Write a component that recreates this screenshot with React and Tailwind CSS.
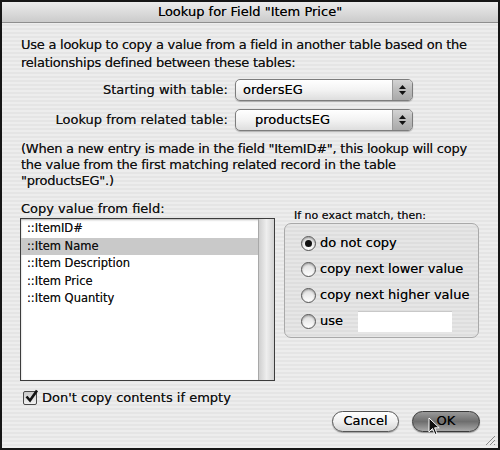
import React from 'react'

const stripes = 'bg-[image:repeating-linear-gradient(180deg,#ededed_0px,#ededed_2px,#e5e5e5_2px,#e5e5e5_4px)]'

function Popup({ value, indent }){
  return (
    <div className="w-[178px] h-[22px] rounded-[5px] border border-[#7d7d7d] flex overflow-hidden bg-gradient-to-b from-white via-[#f3f3f3] to-[#dedede] shadow-[0_1px_1px_rgba(0,0,0,0.25)]">
      <div className={`flex-1 flex items-center text-[13px] text-black ${indent ? 'pl-[19px]' : 'pl-[7px]'}`}>{value}</div>
      <div className="w-[20px] border-l border-[#9a9a9a] bg-gradient-to-b from-[#d4d4d4] via-[#bcbcbc] to-[#a9a9a9] flex flex-col items-center justify-center gap-[2px]">
        <svg width="7" height="4" viewBox="0 0 7 4"><path d="M3.5 0L7 4H0z" fill="#111" /></svg>
        <svg width="7" height="4" viewBox="0 0 7 4"><path d="M0 0h7L3.5 4z" fill="#111" /></svg>
      </div>
    </div>
  )
}

function Radio({ on, label, children }){
  return (
    <div className="h-[26px] flex items-center">
      <div className="w-[15px] h-[15px] rounded-full border border-[#555] bg-gradient-to-b from-[#dcdcdc] to-white shadow-[inset_0_1px_2px_rgba(0,0,0,0.3)] flex items-center justify-center">
        {on && <div className="w-[7px] h-[7px] rounded-full bg-[#111]" />}
      </div>
      <span className="ml-[4px] text-[13px] text-black">{label}</span>
      {children}
    </div>
  )
}

export default function App(){
  const items = ['::ItemID#', '::Item Name', '::Item Description', '::Item Price', '::Item Quantity']

  return (
    <div className={`w-[500px] h-[450px] border-2 border-[#161616] relative overflow-hidden ${stripes} text-[#111] [text-shadow:0_0_0.4px_rgba(0,0,0,0.6)]`} style={{ fontFamily: '"DejaVu Sans", Verdana, sans-serif' }}>
      <div className="h-[21px] bg-gradient-to-b from-[#ececec] to-[#cbcbcb] border-b border-[#8e8e8e] rounded-t-[5px] flex items-center justify-center text-[13px] text-black">
        Lookup for Field "Item Price"
      </div>

      <div className="pl-[19px]">
        <p className="mt-[13px] text-[13px] leading-[17.5px] tracking-[-0.25px]">
          Use a lookup to copy a value from a field in another table based on the<br />
          relationships defined between these tables:
        </p>

        <div className="mt-[8px] flex flex-col gap-[8px]">
          <div className="flex items-center">
            <div className="w-[207px] text-right text-[13px]">Starting with table:</div>
            <div className="ml-[7px]"><Popup value="ordersEG" /></div>
          </div>
          <div className="flex items-center">
            <div className="w-[207px] text-right text-[13px]">Lookup from related table:</div>
            <div className="ml-[7px]"><Popup value="productsEG" indent /></div>
          </div>
        </div>

        <p className="mt-[10px] text-[13px] leading-[16px] tracking-[-0.25px]">
          (When a new entry is made in the field "ItemID#", this lookup will copy<br />
          the value from the first matching related record in the table<br />
          "productsEG".)
        </p>

        <div className="mt-[11px] flex">
          <div className="w-[254px]">
            <div className="text-[13px] leading-[18px]">Copy value from field:</div>
            <div className="h-[163px] -ml-[1px] border border-[#3c3c3c] bg-white flex shadow-[inset_0_1px_2px_rgba(0,0,0,0.3)]">
              <div className="flex-1 pt-[1px]">
                {items.map((it, i) => (
                  <div key={it} className={`h-[17.5px] pl-[6px] flex items-center text-[11.5px] ${i === 1 ? 'bg-[#c9c9c9]' : ''}`}>{it}</div>
                ))}
              </div>
              <div className="w-[16px] border-l border-[#a8a8a8] bg-gradient-to-r from-[#cfcfcf] via-[#eeeeee] to-[#d4d4d4]" />
            </div>
          </div>

          <div className="ml-[9px] pt-[8px] flex-1 pr-[19px]">
            <div className="text-[11px] leading-[15px] pl-[10px]">If no exact match, then:</div>
            <div className="h-[115px] rounded-[7px] border border-[#a9a9a9] bg-[image:repeating-linear-gradient(180deg,#e6e6e6_0px,#e6e6e6_2px,#dedede_2px,#dedede_4px)] pl-[16px] pt-[6px]">
              <Radio on label="do not copy" />
              <Radio label="copy next lower value" />
              <Radio label="copy next higher value" />
              <Radio label="use">
                <div className="ml-[15px] w-[94px] h-[21px] bg-white border-t border-[#c8c8c8]" />
              </Radio>
            </div>
          </div>
        </div>

        <div className="mt-[7px] flex items-center">
          <div className="ml-[2px] w-[14px] h-[14px] border border-[#4a4a4a] rounded-[2px] bg-gradient-to-b from-[#c9c9c9] to-[#f2f2f2] relative">
            <svg className="absolute -top-[3px] left-[0px]" width="15" height="15" viewBox="0 0 15 15">
              <path d="M2.5 7.5L6 11.5L13 1.5" fill="none" stroke="#111" strokeWidth="2.6" />
            </svg>
          </div>
          <span className="ml-[5px] text-[13px]">Don't copy contents if empty</span>
        </div>
      </div>

      <div className="mt-[3px] flex justify-end gap-[13px] pr-[18px]">
        <div className="w-[67px] h-[21px] rounded-full border border-[#555] bg-gradient-to-b from-white via-[#f0f0f0] to-[#d6d6d6] flex items-center justify-center text-[13px] text-black shadow-[0_1px_1px_rgba(0,0,0,0.3)]">Cancel</div>
        <div className="w-[68px] h-[21px] rounded-full border border-[#3a3a3a] bg-gradient-to-b from-[#9a9a9a] via-[#6e6e6e] to-[#a8a8a8] flex items-center justify-center text-[13px] text-black shadow-[0_1px_1px_rgba(0,0,0,0.35)]">OK</div>
      </div>

      <svg className="absolute left-[426px] top-[415px]" width="12" height="19" viewBox="0 0 12 19">
        <path d="M1 1V15L4.5 11.5L7 17.5L9 16.6L6.6 10.8H11.2Z" fill="#111" stroke="#fff" strokeWidth="1" />
      </svg>

      <svg className="absolute right-[2px] bottom-[2px]" width="12" height="12" viewBox="0 0 12 12">
        <path d="M11 2L2 11M11 6L6 11M11 10L10 11" stroke="#8a8a8a" strokeWidth="1" />
      </svg>
    </div>
  )
}
